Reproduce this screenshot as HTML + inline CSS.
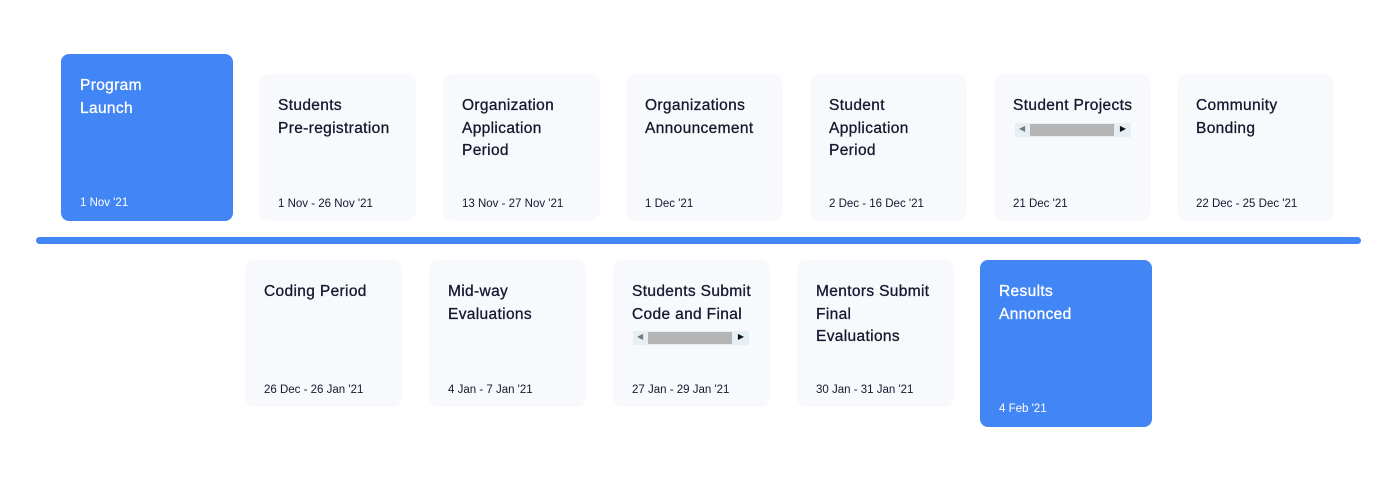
<!DOCTYPE html><html><head><style>
body{margin:0;width:1400px;height:491px;background:#fff;font-family:"Liberation Sans",sans-serif;position:relative;overflow:hidden}
.c{position:absolute;width:157px;height:147px;background:#f7f9fc;border-radius:10px;box-sizing:border-box;padding:21px 19px 0 19px;color:#14182e}
.c .t{font-size:15.5px;line-height:22.5px;letter-spacing:0.35px;-webkit-text-stroke:0.3px;white-space:nowrap}
.c .d{position:absolute;left:19px;bottom:11px;font-size:11.5px}
.b{background:#4285f4;color:#fff;width:172px;height:167px;border-radius:8px}
.b .d{bottom:12px}
.line{position:absolute;left:36px;top:237px;width:1325px;height:7px;background:#4285f4;border-radius:4px}
.sb{position:absolute;height:14px;width:116px;background:#e6eff4}
.sb i{position:absolute;left:15px;top:1px;width:84px;height:12px;background:#b4b4b4}
.sb .l{position:absolute;left:4px;top:1px;font-size:8px;color:#777}
.sb .r{position:absolute;right:5px;top:1px;font-size:8px;color:#111}
</style></head><body>
<div class="c b" style="left:61px;top:54px"><div class="t">Program<br>Launch</div><div class="d">1 Nov '21</div></div>
<div class="c" style="left:259px;top:74px"><div class="t">Students<br>Pre-registration</div><div class="d">1 Nov - 26 Nov '21</div></div>
<div class="c" style="left:443px;top:74px"><div class="t">Organization<br>Application<br>Period</div><div class="d">13 Nov - 27 Nov '21</div></div>
<div class="c" style="left:626px;top:74px"><div class="t">Organizations<br>Announcement</div><div class="d">1 Dec '21</div></div>
<div class="c" style="left:810px;top:74px"><div class="t">Student<br>Application<br>Period</div><div class="d">2 Dec - 16 Dec '21</div></div>
<div class="c" style="left:994px;top:74px"><div class="t">Student Projects</div><div class="sb" style="left:21px;top:49px"><span class="l">◀</span><i></i><span class="r">▶</span></div><div class="d">21 Dec '21</div></div>
<div class="c" style="left:1177px;top:74px"><div class="t">Community<br>Bonding</div><div class="d">22 Dec - 25 Dec '21</div></div>
<div class="line"></div>
<div class="c" style="left:245px;top:260px"><div class="t">Coding Period</div><div class="d">26 Dec - 26 Jan '21</div></div>
<div class="c" style="left:429px;top:260px"><div class="t">Mid-way<br>Evaluations</div><div class="d">4 Jan - 7 Jan '21</div></div>
<div class="c" style="left:613px;top:260px"><div class="t">Students Submit<br>Code and Final</div><div class="sb" style="left:20px;top:71px"><span class="l">◀</span><i></i><span class="r">▶</span></div><div class="d">27 Jan - 29 Jan '21</div></div>
<div class="c" style="left:797px;top:260px"><div class="t">Mentors Submit<br>Final<br>Evaluations</div><div class="d">30 Jan - 31 Jan '21</div></div>
<div class="c b" style="left:980px;top:260px"><div class="t">Results<br>Annonced</div><div class="d">4 Feb '21</div></div>
</body></html>
